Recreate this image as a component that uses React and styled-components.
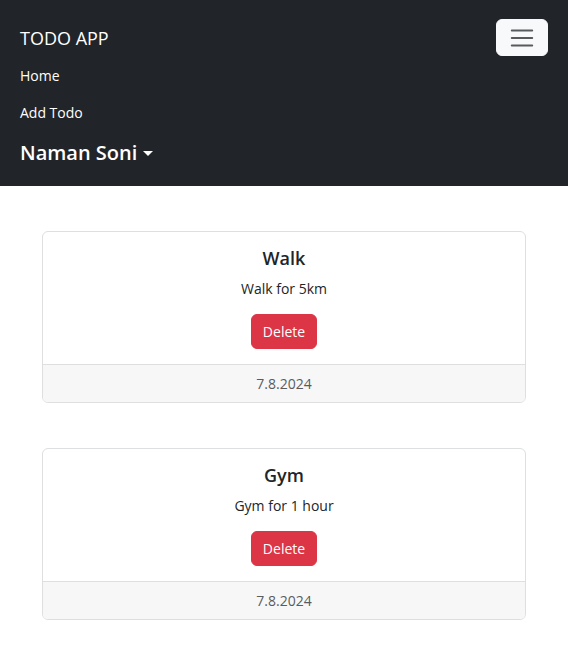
import React from "react";
import styled, { createGlobalStyle } from "styled-components";

const Global = createGlobalStyle`
  *, *::before, *::after { box-sizing: border-box; }
  body {
    margin: 0;
    background: #fff;
    color: #212529;
    font-family: "Segoe UI", "Open Sans", "Noto Sans", sans-serif;
    font-size: 14px;
    line-height: 22px;
  }
`;

const Header = styled.header`
  display: flex;
  flex-direction: column;
  padding: 19px 20px 14px;
  background: #212529;
  color: #fff;
`;

const TopRow = styled.div`
  display: flex;
  align-items: center;
  justify-content: space-between;
`;

const Brand = styled.a`
  color: #fff;
  font-size: 18px;
  line-height: 28px;
  text-decoration: none;
`;

const Toggler = styled.button`
  display: flex;
  align-items: center;
  justify-content: center;
  width: 52px;
  height: 37px;
  padding: 0;
  border: 1px solid #f8f9fa;
  border-radius: 6px;
  background: #f8f9fa;
  cursor: pointer;
`;

const Nav = styled.nav`
  display: flex;
  flex-direction: column;
  align-items: flex-start;
  padding-top: 1px;
`;

const NavLink = styled.a`
  padding: 8px 0 7px;
  color: #fff;
  text-decoration: none;
`;

const UserMenu = styled.button`
  display: flex;
  align-items: center;
  gap: 6px;
  padding: 7px 0 4px;
  border: 0;
  background: none;
  color: #fff;
  font: inherit;
  font-size: 20px;
  font-weight: 600;
  line-height: 30px;
  cursor: pointer;
`;

const Caret = styled.span`
  border: 5px solid transparent;
  border-top-color: currentColor;
  border-bottom: 0;
`;

const List = styled.main`
  display: flex;
  flex-direction: column;
  gap: 45px;
  padding: 45px 42px 32px;
`;

const Card = styled.article`
  border: 1px solid #dedfe0;
  border-radius: 6px;
  overflow: hidden;
  text-align: center;
`;

const CardBody = styled.div`
  display: flex;
  flex-direction: column;
  align-items: center;
  padding: 15px;
`;

const Title = styled.h2`
  margin: 0 0 9px;
  font-size: 18px;
  font-weight: 600;
  line-height: 22px;
`;

const Text = styled.p`
  margin: 0 0 14px;
`;

const DeleteButton = styled.button`
  padding: 6px 11px;
  border: 1px solid #dc3545;
  border-radius: 6px;
  background: #dc3545;
  color: #fff;
  font: inherit;
  line-height: 21px;
  cursor: pointer;
`;

const CardFooter = styled.footer`
  padding: 8px 15px;
  border-top: 1px solid #dedfe0;
  background: #f7f7f7;
  color: #595c5f;
  line-height: 21px;
`;

const todos = [
  { title: "Walk", text: "Walk for 5km", date: "7.8.2024" },
  { title: "Gym", text: "Gym for 1 hour", date: "7.8.2024" },
];

export default function App() {
  return (
    <>
      <Global />
      <Header>
        <TopRow>
          <Brand href="#">TODO APP</Brand>
          <Toggler type="button" aria-label="Toggle navigation" aria-expanded="true">
            <svg width="28" height="28" viewBox="0 0 30 30" fill="none" aria-hidden="true">
              <path d="M4 7h22M4 15h22M4 23h22" stroke="#212529" strokeOpacity="0.75" strokeWidth="2" strokeLinecap="round" />
            </svg>
          </Toggler>
        </TopRow>
        <Nav>
          <NavLink href="#home">Home</NavLink>
          <NavLink href="#add">Add Todo</NavLink>
          <UserMenu type="button" aria-haspopup="true">
            Naman Soni
            <Caret />
          </UserMenu>
        </Nav>
      </Header>
      <List>
        {todos.map((todo) => (
          <Card key={todo.title}>
            <CardBody>
              <Title>{todo.title}</Title>
              <Text>{todo.text}</Text>
              <DeleteButton type="button">Delete</DeleteButton>
            </CardBody>
            <CardFooter>{todo.date}</CardFooter>
          </Card>
        ))}
      </List>
    </>
  );
}
